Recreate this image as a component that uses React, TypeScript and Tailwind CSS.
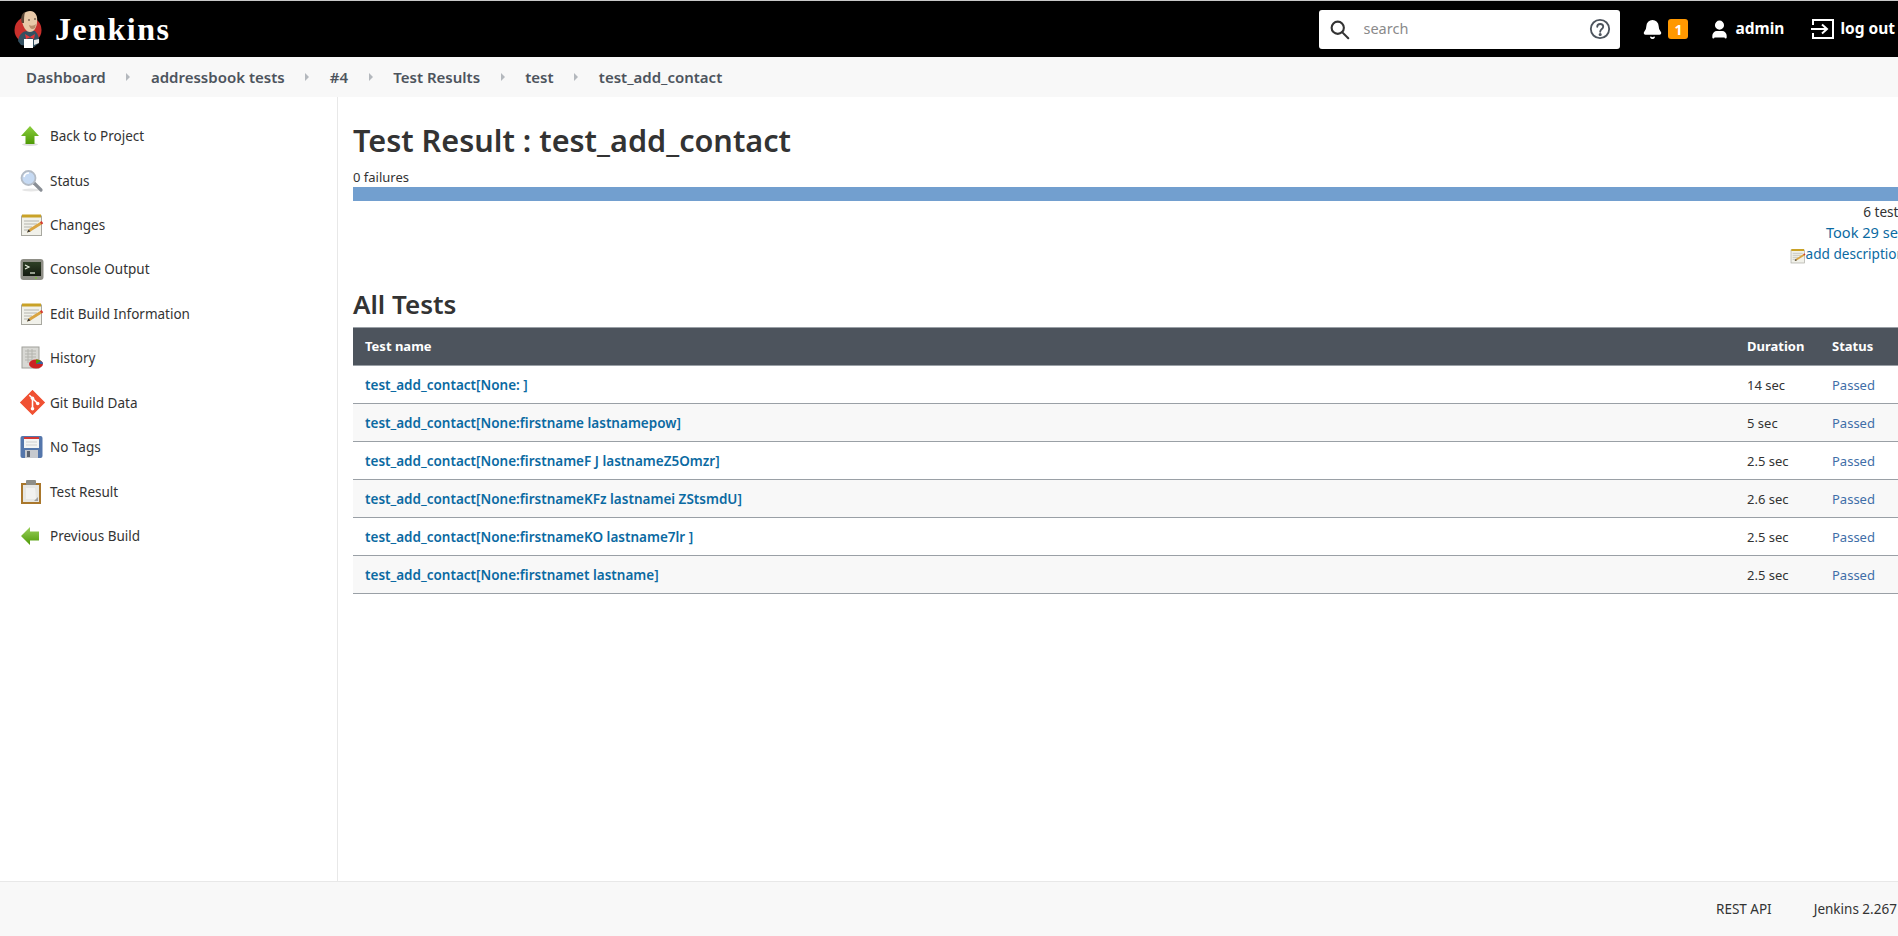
import React from "react"
import { Bell, User } from "lucide-react"

const font = { fontFamily: '"Noto Sans", sans-serif' }

const crumbs = ["Dashboard", "addressbook tests", "#4", "Test Results", "test", "test_add_contact"]

const rows = [
  { name: "test_add_contact[None: ]", time: "14 sec" },
  { name: "test_add_contact[None:firstname lastnamepow]", time: "5 sec" },
  { name: "test_add_contact[None:firstnameF J lastnameZ5Omzr]", time: "2.5 sec" },
  { name: "test_add_contact[None:firstnameKFz lastnamei ZStsmdU]", time: "2.6 sec" },
  { name: "test_add_contact[None:firstnameKO lastname7lr ]", time: "2.5 sec" },
  { name: "test_add_contact[None:firstnamet lastname]", time: "2.5 sec" },
]

const JenkinsLogo = () => (
  <svg width="30" height="38" viewBox="0 0 30 38">
    <circle cx="14" cy="20" r="13.5" fill="#c9302c" />
    <path d="M4 31 C5 24 9 21 14 21 L21 21 C24 24 26 29 25 33 L20 37 L7 35 Z" fill="#335061" />
    <path d="M8 11 C7 5 11 1 16 1 C22 1 24 7 23 12 C23 17 20 22 16 22 C12 22 9 17 8 11 Z" fill="#e8c9a8" />
    <path d="M8 13 C6 8 8 3 11 2 C10 6 10 9 10 13 Z" fill="#5a4636" />
    <path d="M15 15 C17 16 20 16 22 14 L21 18 C18 20 16 19 15 15 Z" fill="#b98d6c" />
    <path d="M14 10 L16 10 M20 9 L22 9" stroke="#49362a" strokeWidth="1.2" />
    <path d="M11 24 L16 27 L21 24 L20 29 L16 27.5 L12 29 Z" fill="#e0383a" />
    <rect x="10" y="29" width="9" height="9" fill="#ffffff" />
    <path d="M20 30 L25 29 L25 33 L20 35 Z" fill="#e8e8e8" />
  </svg>
)

const ArrowUpIcon = () => (
  <svg width="24" height="24" viewBox="0 0 24 24">
    <defs>
      <linearGradient id="gUp" x1="0" y1="0" x2="0" y2="1">
        <stop offset="0" stopColor="#8ccf3f" />
        <stop offset="1" stopColor="#4e9a06" />
      </linearGradient>
    </defs>
    <ellipse cx="10" cy="20.5" rx="8" ry="1.5" fill="#dddddd" />
    <path d="M10 2 L19 12 L14.5 12 L14.5 20 L5.5 20 L5.5 12 L1 12 Z" fill="url(#gUp)" />
  </svg>
)

const ArrowLeftIcon = () => (
  <svg width="24" height="24" viewBox="0 0 24 24">
    <defs>
      <linearGradient id="gLeft" x1="0" y1="0" x2="0" y2="1">
        <stop offset="0" stopColor="#9ad05c" />
        <stop offset="1" stopColor="#4e9a06" />
      </linearGradient>
    </defs>
    <path d="M1 12 L10 3 L10 7.5 L19 7.5 L19 16.5 L10 16.5 L10 21 Z" fill="url(#gLeft)" />
  </svg>
)

const SearchIcon = () => (
  <svg width="24" height="24" viewBox="0 0 24 24">
    <ellipse cx="11" cy="21" rx="9" ry="1.5" fill="#e6e6e6" />
    <path d="M14 14 L21 21" stroke="#8a8f96" strokeWidth="3.2" strokeLinecap="round" />
    <circle cx="8.5" cy="9" r="7" fill="#c6daf3" stroke="#b4bcc6" strokeWidth="1.8" />
    <path d="M4 8 C4.5 5.5 6.5 4 9 4" stroke="#ffffff" strokeWidth="1.5" fill="none" />
  </svg>
)

const NotepadIcon = ({ size = 24 }: { size?: number }) => (
  <svg width={size} height={size} viewBox="0 0 24 24">
    <rect x="1.5" y="3" width="20" height="19.5" fill="#f1f1ea" stroke="#a8a8a0" />
    <rect x="2" y="1.5" width="19" height="3" fill="#c9a227" />
    <path d="M4 8 H19 M4 11 H17 M4 14 H12 M4 17 H9" stroke="#b5b5ad" strokeWidth="1" />
    <path d="M7 19.5 L9 16 L21 8.5 L22.5 11 L10.5 18.5 Z" fill="#d9a441" />
    <path d="M20 9.2 L21.6 8 L23.2 10.2 L21.6 11.4 Z" fill="#d33833" />
    <path d="M7 19.5 L8.5 16.5 L10.5 18.5 Z" fill="#3a3a3a" />
  </svg>
)

const TerminalIcon = () => (
  <svg width="24" height="24" viewBox="0 0 24 24">
    <defs>
      <linearGradient id="gScreen" x1="0" y1="0" x2="0" y2="1">
        <stop offset="0" stopColor="#2e3f26" />
        <stop offset="1" stopColor="#141a10" />
      </linearGradient>
    </defs>
    <rect x="0.5" y="1" width="23" height="21" rx="3" fill="#8e8e86" />
    <rect x="3" y="4" width="18" height="14" fill="url(#gScreen)" />
    <path d="M5 7 L9 9 L5 11" stroke="#e8f0e0" strokeWidth="1.2" fill="none" />
    <path d="M10 15 H15" stroke="#e8f0e0" strokeWidth="1.2" />
    <rect x="15" y="19.5" width="2" height="1" fill="#73d216" />
  </svg>
)

const HistoryIcon = () => (
  <svg width="24" height="24" viewBox="0 0 24 24">
    <rect x="2" y="1" width="17" height="21" fill="#d8d8d4" stroke="#a0a09a" />
    <path d="M5 5 H16 M5 8 H16 M5 11 H16 M5 14 H12 M8 3 V17 M12 3 V14" stroke="#b4b4ae" strokeWidth="1" />
    <ellipse cx="16" cy="18" rx="7" ry="4.5" fill="#cc2222" />
    <path d="M16 18 L16 13.5 C18 13.5 20 14 21 15 Z" fill="#4e9a06" />
    <path d="M16 18 L21 15 C22.5 16 23 17 23 18 Z" fill="#3465a4" />
  </svg>
)

const GitIcon = () => (
  <svg width="25" height="25" viewBox="0 0 24 24">
    <path d="M12 0.5 L23.5 12 L12 23.5 L0.5 12 Z" fill="#f05133" stroke="#f05133" strokeWidth="1" strokeLinejoin="round" />
    <path d="M9 5 L17 13 M12 8 V18" stroke="#ffffff" strokeWidth="1.5" />
    <circle cx="12" cy="8" r="1.7" fill="#ffffff" />
    <circle cx="12" cy="18" r="1.7" fill="#ffffff" />
    <circle cx="17" cy="13" r="1.7" fill="#ffffff" />
  </svg>
)

const SaveIcon = () => (
  <svg width="24" height="24" viewBox="0 0 24 24">
    <rect x="0.5" y="1" width="22" height="22" rx="2" fill="#5476ab" />
    <rect x="4" y="2" width="15" height="11" fill="#f4f4f4" />
    <rect x="4" y="2" width="15" height="2" fill="#d33833" />
    <path d="M6 7 H17 M6 10 H17" stroke="#d0d0d0" />
    <rect x="5" y="15" width="13" height="8" fill="#c6c9ce" />
    <rect x="7" y="16" width="3" height="6" fill="#5c6470" />
  </svg>
)

const ClipboardIcon = () => (
  <svg width="24" height="26" viewBox="0 0 24 26">
    <rect x="1" y="4" width="20" height="21" fill="#a9772c" />
    <rect x="3" y="6" width="16" height="17" fill="#e6e6e2" />
    <path d="M6 9 H15 L16 20 L6 20 Z" fill="#f2f2f0" />
    <path d="M14 22 L18 18 L18 22 Z" fill="#a0a0a0" />
    <rect x="6" y="1" width="10" height="5" rx="1" fill="#8e8e88" />
  </svg>
)

const sideItems = [
  { label: "Back to Project", icon: <ArrowUpIcon /> },
  { label: "Status", icon: <SearchIcon /> },
  { label: "Changes", icon: <NotepadIcon /> },
  { label: "Console Output", icon: <TerminalIcon /> },
  { label: "Edit Build Information", icon: <NotepadIcon /> },
  { label: "History", icon: <HistoryIcon /> },
  { label: "Git Build Data", icon: <GitIcon /> },
  { label: "No Tags", icon: <SaveIcon /> },
  { label: "Test Result", icon: <ClipboardIcon /> },
  { label: "Previous Build", icon: <ArrowLeftIcon /> },
]

const Header = () => (
  <header className="h-[57px] shrink-0 bg-black border-t border-[#c8c8c8] flex items-center text-white">
    <div className="ml-[14px] flex items-center">
      <JenkinsLogo />
      <span className="ml-[11px] text-[32px] font-bold tracking-[1.5px] leading-none" style={{ fontFamily: '"Liberation Serif", serif' }}>
        Jenkins
      </span>
    </div>
    <div className="ml-auto w-[301px] h-[39px] bg-white rounded-[3px] flex items-center pl-[10px] pr-[9px]">
      <svg width="21" height="21" viewBox="0 0 24 24" fill="none" stroke="#333" strokeWidth="2.4">
        <circle cx="10" cy="10" r="7" />
        <path d="M15 15 L22 22" strokeLinecap="round" />
      </svg>
      <span className="ml-[13px] text-[14.5px] text-[#8a8a8a]">search</span>
      <svg className="ml-auto" width="22" height="22" viewBox="0 0 24 24" fill="none" stroke="#4d545d" strokeWidth="2">
        <circle cx="12" cy="12" r="10" />
        <path d="M9 9.5 C9 5.5 15.5 5.5 15.5 9.5 C15.5 12 12.2 12 12.2 15" strokeLinecap="round" />
        <circle cx="12.2" cy="18" r="0.7" fill="#4d545d" />
      </svg>
    </div>
    <Bell className="ml-[22px] fill-white" size={21} strokeWidth={2} />
    <span className="ml-[5px] w-[20px] h-[20px] bg-[#ff9800] rounded-[3px] flex items-center justify-center text-[14px] font-bold">1</span>
    <User className="ml-[21px] fill-white" size={21} strokeWidth={2.4} />
    <span className="ml-[5px] text-[15.5px] font-bold">admin</span>
    <svg className="ml-[27px]" width="24" height="22" viewBox="0 0 24 22" fill="none" stroke="#fff" strokeWidth="2">
      <path d="M2 7 V2 H22 V20 H2 V15" />
      <path d="M0 11 H15 M11 6.5 L16 11 L11 15.5" />
    </svg>
    <span className="ml-[5px] mr-[3px] text-[15.5px] font-bold">log out</span>
  </header>
)

const Breadcrumbs = () => (
  <nav className="h-[40px] shrink-0 bg-[#f8f8f8] flex items-center pl-[26px] text-[15px] font-semibold text-[#4d545d]">
    {crumbs.map((c, i) => (
      <React.Fragment key={c}>
        {i > 0 && <span className="mx-[20.6px] w-0 h-0 border-y-[4px] border-y-transparent border-l-[4px] border-l-[#b4b8bd]" />}
        <span className="whitespace-nowrap">{c}</span>
      </React.Fragment>
    ))}
  </nav>
)

const Sidebar = () => (
  <aside className="w-[338px] shrink-0 border-r border-[#e8e8e8] pt-[17px] pl-[20px]">
    {sideItems.map((item) => (
      <div key={item.label} className="h-[44.44px] flex items-center text-[13.5px] text-[#333]">
        <span className="w-[30px] shrink-0">{item.icon}</span>
        <span>{item.label}</span>
      </div>
    ))}
  </aside>
)

export default function App() {
  return (
    <div className="w-[1898px] h-[936px] overflow-hidden flex flex-col bg-white text-[#333]" style={font}>
      <Header />
      <Breadcrumbs />
      <div className="flex-1 flex min-h-0">
        <Sidebar />
        <main className="flex-1 min-w-0 overflow-hidden pl-[15px] pt-[22px]">
          <div className="w-[1552px]">
            <h1 className="text-[30.6px] leading-[42px] font-semibold text-[#333]">Test Result : test_add_contact</h1>
            <div className="mt-[7px] text-[13px] leading-[19px]">0 failures</div>
            <div className="h-[14px] bg-[#729fcf]" />
            <div className="text-right text-[13.6px] leading-[21px]">
              <div>6 tests</div>
              <div className="text-[14.6px] text-[#0b6aa2]">Took 29 sec</div>
              <div className="text-[#0b6aa2] flex justify-end items-end">
                <NotepadIcon size={16} />
                add description
              </div>
            </div>
            <h2 className="mt-[22px] text-[26px] leading-[36px] font-semibold text-[#333]">All Tests</h2>
            <table className="mt-[5px] w-full table-fixed border-collapse text-[13px]">
              <colgroup>
                <col className="w-[1382px]" />
                <col className="w-[85px]" />
                <col />
              </colgroup>
              <thead>
                <tr className="h-[38px] bg-[#4d545d] text-white text-left border-y border-[#9aa0a6]">
                  <th className="pl-[12px] pt-[1px] font-bold">Test name</th>
                  <th className="pl-[12px] pt-[1px] font-bold">Duration</th>
                  <th className="pl-[12px] pt-[1px] font-bold">Status</th>
                </tr>
              </thead>
              <tbody>
                {rows.map((r, i) => (
                  <tr key={r.name} className={`h-[38px] border-b border-[#9aa0a6] ${i % 2 === 1 ? "bg-[#f8f8f8]" : "bg-white"}`}>
                    <td className="pl-[12px] pt-[2px] text-[13.5px] font-semibold text-[#0b6aa2]">{r.name}</td>
                    <td className="pl-[12px] pt-[2px]">{r.time}</td>
                    <td className="pl-[12px] pt-[2px] text-[#3f6ea8]">Passed</td>
                  </tr>
                ))}
              </tbody>
            </table>
          </div>
        </main>
      </div>
      <footer className="h-[55px] shrink-0 bg-[#f8f8f8] border-t border-[#e8e8e8] flex items-center pl-[1716px] text-[13.5px] whitespace-nowrap">
        <span>REST API</span>
        <span className="ml-[42px]">Jenkins 2.267</span>
      </footer>
    </div>
  )
}
